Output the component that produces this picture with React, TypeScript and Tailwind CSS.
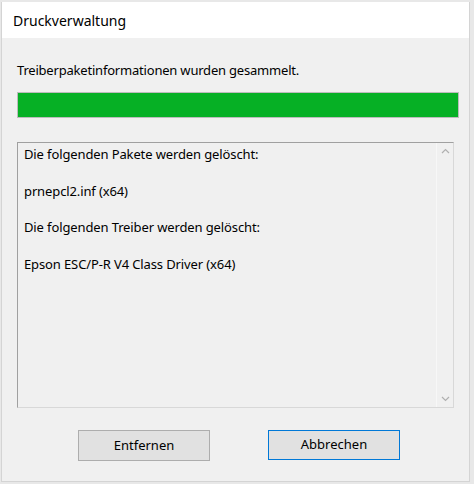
import React from "react";

export default function App() {
  const font = { fontFamily: '"Noto Sans", "Open Sans", sans-serif' };
  return (
    <div className="w-[474px] h-[484px] bg-[#e8e8e8] overflow-hidden" style={font}>
      <div className="mt-[2px] ml-[1px] w-[469px] h-[480px] flex flex-col bg-[#f0f0f0] border-l border-r border-b border-[#d4d4d4]">
        <div className="h-[36px] bg-white flex items-center pl-[11px] text-[14px] text-black">
          Druckverwaltung
        </div>
        <div className="flex flex-col px-[15px] pt-[23px]">
          <div className="text-[13px] tracking-[-0.2px] leading-[18px] text-black">Treiberpaketinformationen wurden gesammelt.</div>
          <div className="mt-[13px] h-[26px] w-[442px] border border-[#bcbcbc] bg-[#e6e6e6]">
            <div className="h-full w-full bg-[#06b025]" />
          </div>
          <div className="mt-[24px] h-[266px] w-[437px] border border-[#a0a0a0] border-r-[#d8d8d8] border-b-[#d8d8d8] flex bg-[#f0f0f0]">
            <div className="flex-1 pl-[6px] pt-[2px] text-[13px] tracking-[-0.12px] leading-[18.3px] text-black">
              <div className="h-[18.3px]">Die folgenden Pakete werden gelöscht:</div>
              <div className="h-[18.3px]" />
              <div className="h-[18.3px]">prnepcl2.inf (x64)</div>
              <div className="h-[18.3px]" />
              <div className="h-[18.3px]">Die folgenden Treiber werden gelöscht:</div>
              <div className="h-[18.3px]" />
              <div className="h-[18.3px]">Epson ESC/P-R V4 Class Driver (x64)</div>
            </div>
            <div className="w-[17px] border-l border-[#f7f7f7] flex flex-col justify-between items-center py-[5px]">
              <svg width="9" height="6" viewBox="0 0 9 6"><path d="M1 5 L4.5 1.5 L8 5" stroke="#b0b0b0" strokeWidth="1.2" fill="none" /></svg>
              <svg width="9" height="6" viewBox="0 0 9 6"><path d="M1 1 L4.5 4.5 L8 1" stroke="#b0b0b0" strokeWidth="1.2" fill="none" /></svg>
            </div>
          </div>
          <div className="mt-[22px] flex gap-[58px] pl-[61px]">
            <button className="w-[132px] h-[31px] bg-[#e1e1e1] border border-[#adadad] text-[13px] text-black">Entfernen</button>
            <button className="w-[132px] h-[30px] bg-[#e1e1e1] border border-[#0078d7] text-[13px] text-black">Abbrechen</button>
          </div>
        </div>
      </div>
    </div>
  );
}
